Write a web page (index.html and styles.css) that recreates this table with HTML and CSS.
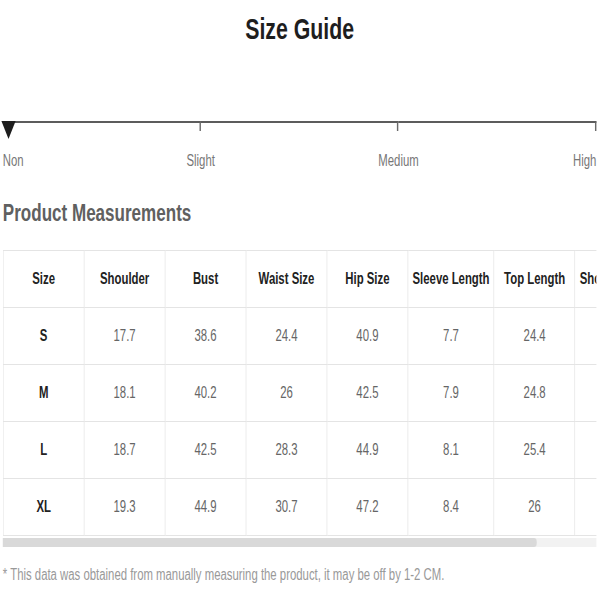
FILE: index.html
```html
<!DOCTYPE html>
<html lang="en">
<head>
<meta charset="utf-8">
<title>Size Guide</title>
<link rel="stylesheet" href="styles.css">
</head>
<body>
<div class="page">
  <h1 class="title">Size Guide</h1>

  <div class="stretch">
    <div class="track">
      <span class="seg"></span><span class="seg"></span><span class="seg"></span>
      <span class="marker"></span>
    </div>
    <div class="labels">
      <span class="lab lab-non">Non</span>
      <span class="lab lab-slight">Slight</span>
      <span class="lab lab-medium">Medium</span>
      <span class="lab lab-high">High</span>
    </div>
  </div>

  <h2 class="section">Product Measurements</h2>

  <div class="scroll">
    <div class="viewport">
      <table class="sizes">
        <thead>
          <tr><th>Size</th><th>Shoulder</th><th>Bust</th><th>Waist Size</th><th>Hip Size</th><th>Sleeve Length</th><th>Top Length</th><th>Shorts Length</th></tr>
        </thead>
        <tbody>
          <tr><th>S</th><td>17.7</td><td>38.6</td><td>24.4</td><td>40.9</td><td>7.7</td><td>24.4</td><td>14.2</td></tr>
          <tr><th>M</th><td>18.1</td><td>40.2</td><td>26</td><td>42.5</td><td>7.9</td><td>24.8</td><td>14.6</td></tr>
          <tr><th>L</th><td>18.7</td><td>42.5</td><td>28.3</td><td>44.9</td><td>8.1</td><td>25.4</td><td>15.2</td></tr>
          <tr><th>XL</th><td>19.3</td><td>44.9</td><td>30.7</td><td>47.2</td><td>8.4</td><td>26</td><td>15.7</td></tr>
        </tbody>
      </table>
    </div>
    <div class="scrollbar"><div class="thumb" style="width: 90%"></div></div>
  </div>

  <p class="note">* This data was obtained from manually measuring the product, it may be off by 1-2 CM.</p>
</div>
</body>
</html>
```
FILE: styles.css
```css
html, body {
  margin: 0;
  padding: 0;
  overflow: hidden;
  background: #fff;
}

.page {
  width: 845px;
  box-sizing: border-box;
  padding: 11px 5px 0 4px;
  transform: scaleX(0.71);
  transform-origin: 0 0;
  font-family: "Liberation Sans", Arial, sans-serif;
  color: #222;
}

.title {
  margin: 0;
  font-size: 30px;
  line-height: 36px;
  font-weight: bold;
  text-align: center;
  color: #1e1e1e;
}

.stretch {
  margin-top: 74px;
}

.track {
  position: relative;
  display: flex;
  height: 10px;
}

.seg {
  flex: 1;
  border-top: 2px solid #5c5c5c;
  border-right: 2px solid #6a6a6a;
  height: 8px;
}

.marker {
  position: absolute;
  left: -2px;
  top: 0;
  width: 0;
  height: 0;
  border-left: 10px solid transparent;
  border-right: 10px solid transparent;
  border-top: 18px solid #1d1d1d;
}

.labels {
  display: grid;
  grid-template-columns: repeat(6, 1fr);
  margin-top: 20px;
  font-size: 16px;
  line-height: 20px;
  color: #777;
}

.lab-non { grid-column: 1; justify-self: start; }
.lab-slight { grid-column: 2 / span 2; justify-self: center; }
.lab-medium { grid-column: 4 / span 2; justify-self: center; }
.lab-high { grid-column: 6; justify-self: end; }

.section {
  margin: 28px 0 0;
  font-size: 24px;
  line-height: 28px;
  font-weight: bold;
  color: #606060;
}

.scroll {
  margin-top: 23px;
}

.viewport {
  overflow: hidden;
}

.scrollbar {
  margin-top: 2px;
  height: 9px;
  background: #f2f2f2;
}

.thumb {
  height: 100%;
  background: #d9d9d9;
  border-radius: 0 4px 4px 0;
}

.sizes {
  border-collapse: collapse;
  font-size: 16px;
}

.sizes th,
.sizes td {
  border: 1px solid #e4e4e4;
  min-width: 101px;
  padding: 0 6px;
  height: 56px;
  text-align: center;
  vertical-align: middle;
  white-space: nowrap;
}

.sizes th {
  font-weight: bold;
  color: #222;
}

.sizes td {
  color: #666;
}

.note {
  margin: 18px 0 0;
  font-size: 16px;
  line-height: 20px;
  color: #999;
}
```
